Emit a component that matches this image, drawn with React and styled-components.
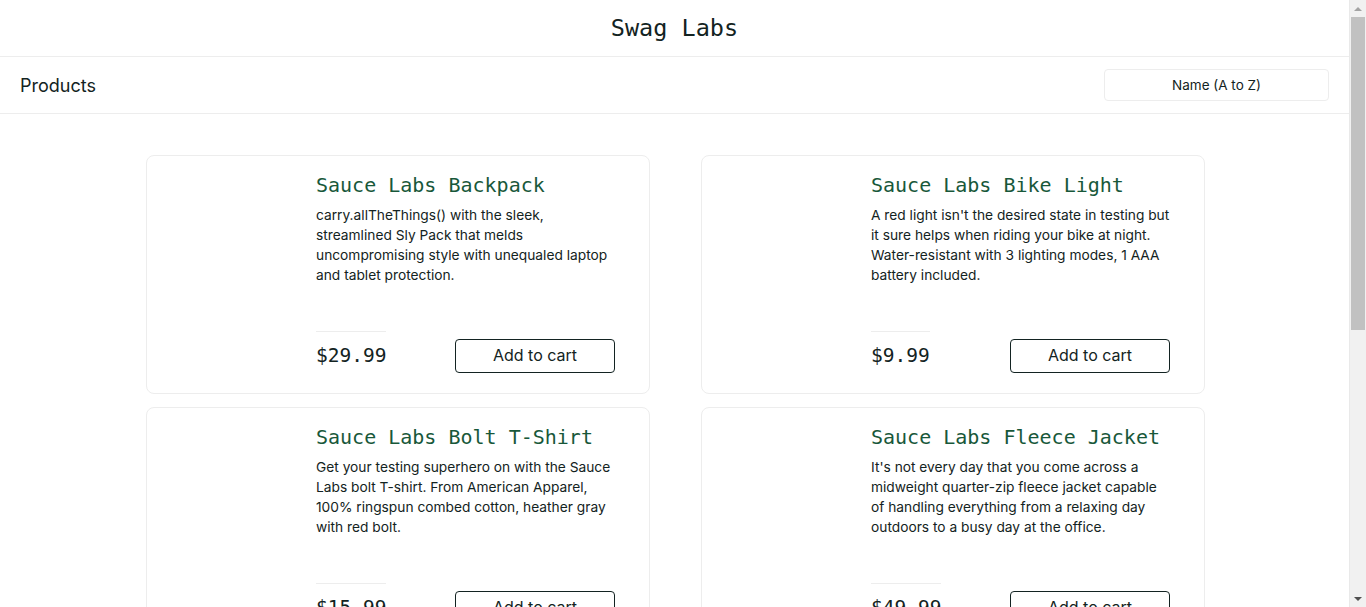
import React from 'react';
import styled, { createGlobalStyle } from 'styled-components';

const GlobalStyle = createGlobalStyle`
  html, body {
    margin: 0;
    padding: 0;
    background: #ffffff;
  }
  body {
    font-family: Inter, "Liberation Sans", sans-serif;
    color: #132322;
  }
  * {
    box-sizing: border-box;
  }
`;

// descriptions kept in the same lines as the shop shows them
const PRODUCTS = [
  {
    id: 4,
    name: 'Sauce Labs Backpack',
    lines: [
      'carry.allTheThings() with the sleek,',
      'streamlined Sly Pack that melds',
      'uncompromising style with unequaled laptop',
      'and tablet protection.',
    ],
    price: '29.99',
  },
  {
    id: 0,
    name: 'Sauce Labs Bike Light',
    lines: [
      "A red light isn't the desired state in testing but",
      'it sure helps when riding your bike at night.',
      'Water-resistant with 3 lighting modes, 1 AAA',
      'battery included.',
    ],
    price: '9.99',
  },
  {
    id: 1,
    name: 'Sauce Labs Bolt T-Shirt',
    lines: [
      'Get your testing superhero on with the Sauce',
      'Labs bolt T-shirt. From American Apparel,',
      '100% ringspun combed cotton, heather gray',
      'with red bolt.',
    ],
    price: '15.99',
  },
  {
    id: 5,
    name: 'Sauce Labs Fleece Jacket',
    lines: [
      "It's not every day that you come across a",
      'midweight quarter-zip fleece jacket capable',
      'of handling everything from a relaxing day',
      'outdoors to a busy day at the office.',
    ],
    price: '49.99',
  },
  {
    id: 2,
    name: 'Sauce Labs Onesie',
    lines: [
      'Rib snap infant onesie for the junior automation',
      'engineer in development. Reinforced 3-snap',
      'bottom closure, two-needle hemmed sleeved',
      "and bottom won't unravel.",
    ],
    price: '7.99',
  },
  {
    id: 3,
    name: 'Test.allTheThings() T-Shirt (Red)',
    lines: [
      'This classic Sauce Labs t-shirt is perfect to',
      'wear when cozying up to your keyboard to',
      'automate a few tests. Super-soft and comfy',
      'ringspun combed cotton.',
    ],
    price: '15.99',
  },
];

const mono = `"DejaVu Sans Mono", "Liberation Mono", monospace`;

const Page = styled.div`
  min-height: 100vh;
  display: flex;
  flex-direction: column;
  margin-right: 17px;
`;

const Header = styled.header`
  height: 57px;
  display: flex;
  align-items: center;
  justify-content: center;
  border-bottom: 1px solid #ededed;
`;

const Logo = styled.div`
  font-family: ${mono};
  font-size: 23.5px;
  color: #132322;
`;

const SubHeader = styled.div`
  height: 57px;
  display: flex;
  align-items: center;
  justify-content: space-between;
  padding: 0 20px;
  border-bottom: 1px solid #ededed;
`;

const Title = styled.span`
  font-size: 18px;
  color: #132322;
`;

const SortBox = styled.div`
  width: 225px;
  height: 32px;
  border: 1px solid #ededed;
  border-radius: 4px;
  display: flex;
  align-items: center;
  justify-content: center;
  font-size: 13.5px;
  color: #132322;
  margin-top: -1px;
`;

const Inventory = styled.main`
  display: grid;
  grid-template-columns: repeat(2, 504px);
  justify-content: center;
  column-gap: 51px;
  row-gap: 13px;
  padding: 41px 0 60px 2px;
`;

const Card = styled.div`
  display: flex;
  border: 1px solid #ededed;
  border-radius: 8px;
  padding: 17px 34px 20px 20px;
`;

const ImageBox = styled.div`
  flex: 0 0 149px;
  height: 200px;
`;

const Details = styled.div`
  flex: 1;
  display: flex;
  flex-direction: column;
  justify-content: space-between;
  min-width: 0;
`;

const Name = styled.div`
  font-family: ${mono};
  font-size: 20px;
  line-height: 24px;
  color: #18583a;
  margin-bottom: 8px;
`;

const Desc = styled.div`
  font-size: 13.75px;
  line-height: 20px;
  color: #132322;
`;

const DescLine = styled.span`
  display: block;
  white-space: nowrap;
`;

const PriceBar = styled.div`
  display: flex;
  align-items: flex-end;
  justify-content: space-between;
`;

const Price = styled.div`
  font-family: ${mono};
  font-size: 19.5px;
  line-height: 24px;
  color: #132322;
  border-top: 1px solid #ededed;
  padding: 12px 0 5px;
`;

const CartButton = styled.button`
  width: 160px;
  height: 34px;
  border: 1px solid #132322;
  border-radius: 4px;
  background: #ffffff;
  color: #132322;
  font-family: Inter, "Liberation Sans", sans-serif;
  font-size: 16px;
  padding: 0 0 2px;
  margin-bottom: 0;
  cursor: pointer;
`;

const Footer = styled.footer`
  margin-top: auto;
  background: #132322;
  color: #ffffff;
  padding: 40px 40px;
  font-size: 14px;
  display: flex;
  flex-direction: column;
  gap: 16px;
`;

const Social = styled.div`
  display: flex;
  gap: 20px;
  font-size: 14px;
`;

/* page scrollbar, drawn over the right edge */
const ScrollBar = styled.div`
  position: fixed;
  top: 0;
  right: 0;
  bottom: 0;
  width: 17px;
  background: #f1f1f1;
  border-left: 1px solid #e9e9e9;
  display: flex;
  flex-direction: column;
`;

const ScrollArrow = styled.div`
  height: 17px;
  display: flex;
  align-items: center;
  justify-content: center;

  &::before {
    content: '';
    border-left: 4px solid transparent;
    border-right: 4px solid transparent;
    ${props => props.down
      ? 'border-top: 4px solid #505050;'
      : 'border-bottom: 4px solid #a3a3a3;'}
  }
`;

const ScrollTrack = styled.div`
  flex: 1;
  padding: 0 1px;
`;

const ScrollThumb = styled.div`
  height: 313px;
  background: #c1c1c1;
`;

function ProductCard({ product }) {
  return (
    <Card>
      <ImageBox />
      <Details>
        <div>
          <Name>{product.name}</Name>
          <Desc>
            {product.lines.map((line, i) => (
              <DescLine key={i}>{line}</DescLine>
            ))}
          </Desc>
        </div>
        <PriceBar>
          <Price>${product.price}</Price>
          <CartButton>Add to cart</CartButton>
        </PriceBar>
      </Details>
    </Card>
  );
}

export default function App() {
  return (
    <>
      <GlobalStyle />
      <Page>
        <Header>
          <Logo>Swag Labs</Logo>
        </Header>
        <SubHeader>
          <Title>Products</Title>
          <SortBox>Name (A to Z)</SortBox>
        </SubHeader>
        <Inventory>
          {PRODUCTS.map((p) => (
            <ProductCard key={p.id} product={p} />
          ))}
        </Inventory>
        <Footer>
          <Social>
            <span>Twitter</span>
            <span>Facebook</span>
            <span>LinkedIn</span>
          </Social>
          <div>© 2025 Sauce Labs. All Rights Reserved. Terms of Service | Privacy Policy</div>
        </Footer>
      </Page>
      <ScrollBar>
        <ScrollArrow />
        <ScrollTrack>
          <ScrollThumb />
        </ScrollTrack>
        <ScrollArrow down />
      </ScrollBar>
    </>
  );
}
